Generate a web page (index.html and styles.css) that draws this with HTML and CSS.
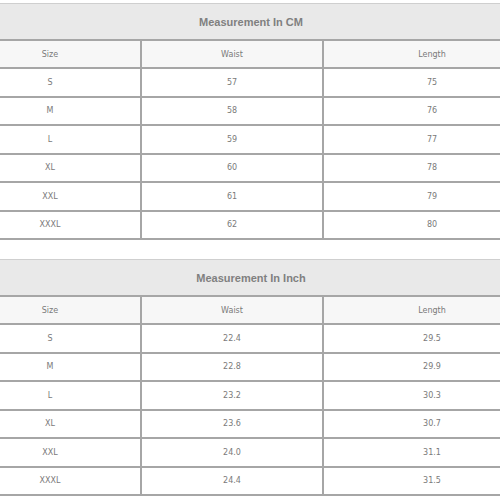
FILE: index.html
```html
<!DOCTYPE html>
<html>
<head>
<meta charset="utf-8">
<link rel="stylesheet" href="styles.css">
</head>
<body>
<div class="page">
  <table class="size-table">
    <colgroup><col class="c1"><col class="c2"><col class="c3"></colgroup>
    <tr><th class="title" colspan="3">Measurement In CM</th></tr>
    <tr class="head"><td>Size</td><td>Waist</td><td>Length</td></tr>
    <tr><td>S</td><td>57</td><td>75</td></tr>
    <tr><td>M</td><td>58</td><td>76</td></tr>
    <tr><td>L</td><td>59</td><td>77</td></tr>
    <tr><td>XL</td><td>60</td><td>78</td></tr>
    <tr><td>XXL</td><td>61</td><td>79</td></tr>
    <tr><td>XXXL</td><td>62</td><td>80</td></tr>
  </table>
  <table class="size-table">
    <colgroup><col class="c1"><col class="c2"><col class="c3"></colgroup>
    <tr><th class="title" colspan="3">Measurement In Inch</th></tr>
    <tr class="head"><td>Size</td><td>Waist</td><td>Length</td></tr>
    <tr><td>S</td><td>22.4</td><td>29.5</td></tr>
    <tr><td>M</td><td>22.8</td><td>29.9</td></tr>
    <tr><td>L</td><td>23.2</td><td>30.3</td></tr>
    <tr><td>XL</td><td>23.6</td><td>30.7</td></tr>
    <tr><td>XXL</td><td>24.0</td><td>31.1</td></tr>
    <tr><td>XXXL</td><td>24.4</td><td>31.5</td></tr>
  </table>
</div>
</body>
</html>
```
FILE: styles.css
```css
html, body {
  margin: 0;
  padding: 0;
  background: #fff;
  overflow: hidden;
}
.page {
  padding-top: 3px;
  display: flex;
  flex-direction: column;
  gap: 19px;
}
.size-table {
  width: 582px;
  margin-left: -40px;
  table-layout: fixed;
  border-collapse: separate;
  border-spacing: 0;
  font-family: "DejaVu Sans", Verdana, sans-serif;
  font-size: 8px;
  color: #7a7a7a;
}
.c1 { width: 182px; }
.c2 { width: 182px; }
.c3 { width: 218px; }
.size-table th.title {
  height: 35px;
  padding: 0;
  background: #e9e9e9;
  border-top: 1px solid #cfcfcf;
  border-bottom: 2px solid #a6a6a6;
  font-family: "Liberation Sans", Arial, sans-serif;
  font-size: 11px;
  font-weight: bold;
  color: #808080;
  text-align: center;
  vertical-align: middle;
}
.size-table td {
  height: 26.5px;
  padding: 0;
  text-align: center;
  vertical-align: middle;
  border-bottom: 2px solid #a6a6a6;
  border-right: 2px solid #a6a6a6;
  background: #fff;
}
.size-table tr.head td {
  height: 26px;
  background: #f7f7f7;
}
```
